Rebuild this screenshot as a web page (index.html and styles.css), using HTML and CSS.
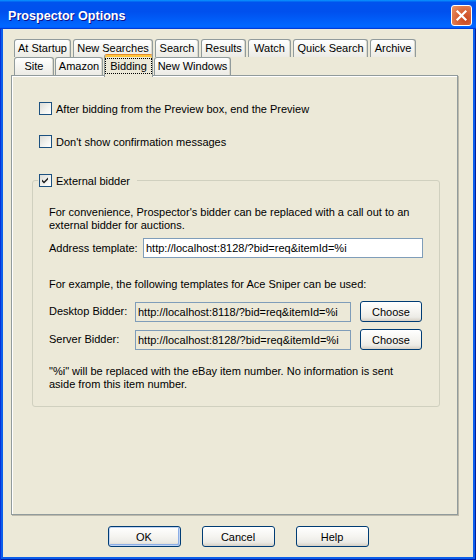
FILE: index.html
```html
<!DOCTYPE html>
<html>
<head>
<meta charset="utf-8">
<title>Prospector Options</title>
<link rel="stylesheet" href="styles.css">
</head>
<body>
<div class="window">
  <div class="titlebar">
    <span class="title">Prospector Options</span>
    <span class="close" aria-label="Close">
      <svg width="19" height="19" viewBox="0 0 19 19"><path d="M5.5 5.5 L13.5 13.5 M13.5 5.5 L5.5 13.5" stroke="#fff" stroke-width="2.2" stroke-linecap="square" fill="none"/></svg>
    </span>
  </div>
  <div class="client">
    <div class="tabs">
      <div class="tab-row row-back">
        <div class="tab w-startup">At Startup</div>
        <div class="tab w-newsearch">New Searches</div>
        <div class="tab w-search">Search</div>
        <div class="tab w-results">Results</div>
        <div class="tab w-watch">Watch</div>
        <div class="tab w-quick">Quick Search</div>
        <div class="tab w-archive">Archive</div>
      </div>
      <div class="tab-row row-front">
        <div class="tab w-site">Site</div>
        <div class="tab w-amazon">Amazon</div>
        <div class="tab active w-bidding"><span class="focus">Bidding</span></div>
        <div class="tab w-newwin">New Windows</div>
      </div>
    </div>
    <div class="panel">
      <div class="check-row"><span class="cb"></span><span>After bidding from the Preview box, end the Preview</span></div>
      <div class="check-row second"><span class="cb"></span><span>Don't show confirmation messages</span></div>
      <fieldset class="group">
        <legend class="group-title"><span class="cb"><svg width="11" height="11" viewBox="0 0 11 11"><polygon points="2,4.5 4,6.5 8,2.5 8,4.5 4,8.5 2,6.5" fill="#1b1b1b"/></svg></span><span>External bidder</span></legend>
        <div class="group-body">
          <p class="text">For convenience, Prospector's bidder can be replaced with a call out to an<br>external bidder for auctions.</p>
          <div class="field-row address">
            <span class="label l-address">Address template:</span>
            <div class="edit e-address">http://localhost:8128/?bid=req&amp;itemId=%i</div>
          </div>
          <p class="text example">For example, the following templates for Ace Sniper can be used:</p>
          <div class="field-row bidder">
            <span class="label l-bidder">Desktop Bidder:</span>
            <div class="edit readonly e-bidder">http://localhost:8118/?bid=req&amp;itemId=%i</div>
            <div class="btn choose">Choose</div>
          </div>
          <div class="field-row bidder server">
            <span class="label l-bidder">Server Bidder:</span>
            <div class="edit readonly e-bidder">http://localhost:8128/?bid=req&amp;itemId=%i</div>
            <div class="btn choose">Choose</div>
          </div>
          <p class="text note">"%i" will be replaced with the eBay item number. No information is sent<br>aside from this item number.</p>
        </div>
      </fieldset>
    </div>
    <div class="buttons">
      <div class="btn dialog default">OK</div>
      <div class="btn dialog">Cancel</div>
      <div class="btn dialog">Help</div>
    </div>
  </div>
</div>
</body>
</html>
```
FILE: styles.css
```css
* { box-sizing: border-box; }
html, body { margin: 0; padding: 0; }
body {
  width: 476px;
  height: 560px;
  font-family: "Liberation Sans", Arial, sans-serif;
  font-size: 11px;
  color: #000;
  background: #0A5CEB;
}
.window {
  width: 476px;
  height: 560px;
  display: flex;
  flex-direction: column;
  background: #0B5EEB;
  box-shadow: inset 1px 0 0 #0831D9, inset -1px 0 0 #001EA0, inset 0 -1px 0 #001EA0;
}
.titlebar {
  height: 29px;
  flex: none;
  display: flex;
  align-items: center;
  justify-content: space-between;
  padding: 2px 4px 0 8px;
  background: linear-gradient(180deg, #0997ff, #0053ee 8%, #0050ee 40%, #06f 88%, #06f 93%, #005bff 95%, #003dd7 96%, #003dd7);
}
.title {
  color: #fff;
  font-weight: bold;
  font-size: 12.6px;
  text-shadow: 1px 1px 0 #0F1089;
}
.close {
  width: 21px;
  height: 21px;
  border: 1px solid #fff;
  border-radius: 3px;
  display: flex;
  align-items: center;
  justify-content: center;
  background: radial-gradient(circle at 70% 70%, #C9461F 0%, #D9653A 45%, #EA9868 100%);
}
.client {
  flex: 1;
  margin: 0 3px 3px 3px;
  background: #ECE9D8;
  padding-top: 10px;
  display: flex;
  flex-direction: column;
}
.tab-row {
  display: flex;
  align-items: flex-end;
  height: 18px;
  padding-left: 11px;
}
.row-back { gap: 2px; }
.row-front { gap: 1px; }
.tab {
  height: 18px;
  border: 1px solid #919B9C;
  border-bottom: none;
  border-radius: 3px 3px 0 0;
  background: linear-gradient(180deg, #FFFFFF 0%, #F7F7F4 40%, #ECEBE5 100%);
  box-shadow: inset -1px 0 0 #DCD9CC;
  text-align: center;
  line-height: 17px;
  white-space: nowrap;
}
.w-startup { width: 57px; }
.w-newsearch { width: 80px; }
.w-search { width: 44px; }
.w-results { width: 45px; }
.w-watch { width: 43px; }
.w-quick { width: 75px; }
.w-archive { width: 46px; }
.w-site { width: 40px; }
.w-amazon { width: 48px; }
.w-bidding { width: 49px; }
.w-newwin { width: 77px; }
.tab.active {
  height: 23px;
  margin-bottom: -2px;
  position: relative;
  z-index: 1;
  background: #ECE9D8;
  border-top: 1px solid #E68B2C;
  box-shadow: inset 0 2px 0 #FFC73C;
  padding-top: 3px;
}
.focus {
  display: block;
  height: 16px;
  border: 1px dotted #000;
  line-height: 14px;
}
.panel {
  margin-left: 8px;
  width: 447px;
  height: 440px;
  border: 1px solid #919B9C;
  background: #ECE9D8;
  box-shadow: inset 1px 1px 0 #fff, 1px 1px 0 #BDBAAC;
  padding: 26px 0 0 20px;
}
.check-row {
  display: flex;
  align-items: center;
  gap: 4px;
  height: 13px;
  margin-left: 7px;
  white-space: nowrap;
}
.check-row.second { margin-top: 20px; }
.cb {
  width: 13px;
  height: 13px;
  flex: none;
  border: 1px solid #1C5180;
  background: linear-gradient(135deg, #DCDCD7 0%, #F4F4F0 60%, #FFFFFF 100%);
  display: flex;
}
.group {
  margin: 26px 0 0 0;
  padding: 0;
  width: 408px;
  min-inline-size: 0;
  border: 1px solid #D0D0BF;
  border-radius: 3px;
}
.group-title {
  margin-left: 5px;
  padding: 0 7px 0 1px;
  display: flex;
  align-items: center;
  gap: 4px;
  height: 13px;
}
.group-body {
  padding: 19px 15px 15px 16px;
}
.text {
  margin: 0;
  line-height: 13px;
  white-space: nowrap;
}
.field-row {
  display: flex;
  align-items: flex-start;
}
.address { margin-top: 6px; }
.example { margin-top: 20px; }
.bidder { margin-top: 10px; height: 21px; }
.bidder.server { margin-top: 7px; }
.note { margin-top: 15px; }
.label {
  flex: none;
  line-height: 20px;
}
.l-address { width: 94px; }
.l-bidder { width: 86px; }
.edit {
  height: 20px;
  border: 1px solid #7F9DB9;
  background: #fff;
  padding: 0 2px;
  line-height: 18px;
  white-space: nowrap;
  overflow: hidden;
}
.e-address { width: 280px; }
.e-bidder { width: 216px; margin-top: 1px; }
.edit.readonly { background: #ECE9D8; }
.btn {
  height: 21px;
  border: 1px solid #003C74;
  border-radius: 3px;
  background: linear-gradient(180deg, #FFFFFF 0%, #F5F4F0 50%, #ECEBE6 80%, #D6D0C5 100%);
  display: flex;
  align-items: center;
  justify-content: center;
}
.choose {
  width: 62px;
  margin-left: 9px;
}
.buttons {
  margin-top: 11px;
  display: flex;
  justify-content: center;
  gap: 21px;
}
.dialog { width: 73px; }
.default {
  box-shadow: inset 0 0 0 1px #C1D4F2, inset -1px -1px 0 1px #8CAEE6;
}
```
